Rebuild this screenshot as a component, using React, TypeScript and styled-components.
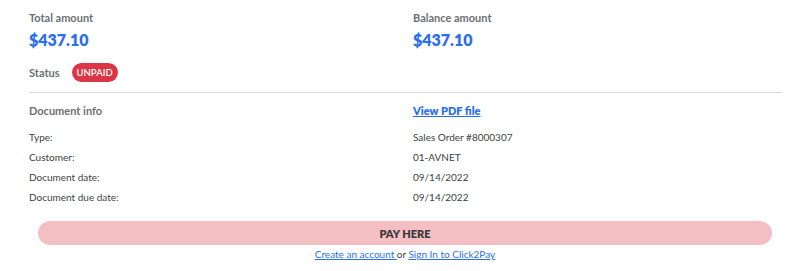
import styled, { createGlobalStyle } from 'styled-components';

const GlobalStyle = createGlobalStyle`
  body {
    margin: 0;
    background: #fff;
    font-family: Lato, "Noto Sans", sans-serif;
  }
`;

const SPage = styled.div`
  padding: 11px 3px 0 29px;
`;

const SGrid = styled.div`
  display: grid;
  grid-template-columns: 384px 1fr;
`;

const SLabel = styled.div`
  font-size: 11px;
  line-height: 14px;
  font-weight: 700;
  color: #6c6f75;
`;

const SAmount = styled.div`
  margin-top: 5px;
  font-size: 16px;
  line-height: 20px;
  font-weight: 800;
  color: #2a6ff0;
`;

const SStatusRow = styled.div`
  display: flex;
  align-items: center;
  gap: 12px;
  margin-top: 13px;
  padding-bottom: 10px;
`;

const SBadge = styled.span`
  display: inline-flex;
  align-items: center;
  height: 19px;
  padding: 0 5px;
  border-radius: 10px;
  background: #dc3545;
  color: #fff;
  font-size: 9.5px;
  font-weight: 600;
`;

const SDivider = styled.hr`
  margin: 0;
  border: 0;
  border-top: 1px solid #d9d9d9;
`;

const SInfo = styled(SGrid)`
  margin-top: 11px;
`;

const SHead = styled.div`
  height: 23px;
  font-size: 11px;
  line-height: 14px;
`;

const SPdfLink = styled.a`
  font-weight: 800;
  color: #2a6ff0;
  text-decoration: underline;
`;

const SCell = styled.div`
  font-size: 10px;
  line-height: 20px;
  color: #3c3f44;
`;

const SActions = styled.div`
  margin: 14px 10px 0 9px;
`;

const SPay = styled.button`
  display: block;
  width: 100%;
  height: 24px;
  border: 0;
  border-radius: 12px;
  background: #f4bfc2;
  color: #3a3a3a;
  font-family: inherit;
  font-size: 11px;
  font-weight: 800;
`;

const SFooter = styled.div`
  margin-top: 3px;
  text-align: center;
  font-size: 10px;
  line-height: 12px;
  color: #3c3f44;
`;

const SLink = styled.a`
  color: #2a6ff0;
  text-decoration: underline;
`;

const rows = [
  ['Type:', 'Sales Order #8000307'],
  ['Customer:', '01-AVNET'],
  ['Document date:', '09/14/2022'],
  ['Document due date:', '09/14/2022'],
];

const App = () => (
  <>
    <GlobalStyle />
    <SPage>
      <SGrid>
        <div>
          <SLabel>Total amount</SLabel>
          <SAmount>$437.10</SAmount>
        </div>
        <div>
          <SLabel>Balance amount</SLabel>
          <SAmount>$437.10</SAmount>
        </div>
      </SGrid>
      <SStatusRow>
        <SLabel>Status</SLabel>
        <SBadge>UNPAID</SBadge>
      </SStatusRow>
      <SDivider />
      <SInfo>
        <SHead>
          <SLabel>Document info</SLabel>
        </SHead>
        <SHead>
          <SPdfLink href="#">View PDF file</SPdfLink>
        </SHead>
        {rows.flatMap(([k, v]) => [
          <SCell key={k}>{k}</SCell>,
          <SCell key={k + '-v'}>{v}</SCell>,
        ])}
      </SInfo>
      <SActions>
        <SPay>PAY HERE</SPay>
        <SFooter>
          <SLink href="#">Create an account </SLink> or <SLink href="#">Sign In to Click2Pay</SLink>
        </SFooter>
      </SActions>
    </SPage>
  </>
);

export default App;
